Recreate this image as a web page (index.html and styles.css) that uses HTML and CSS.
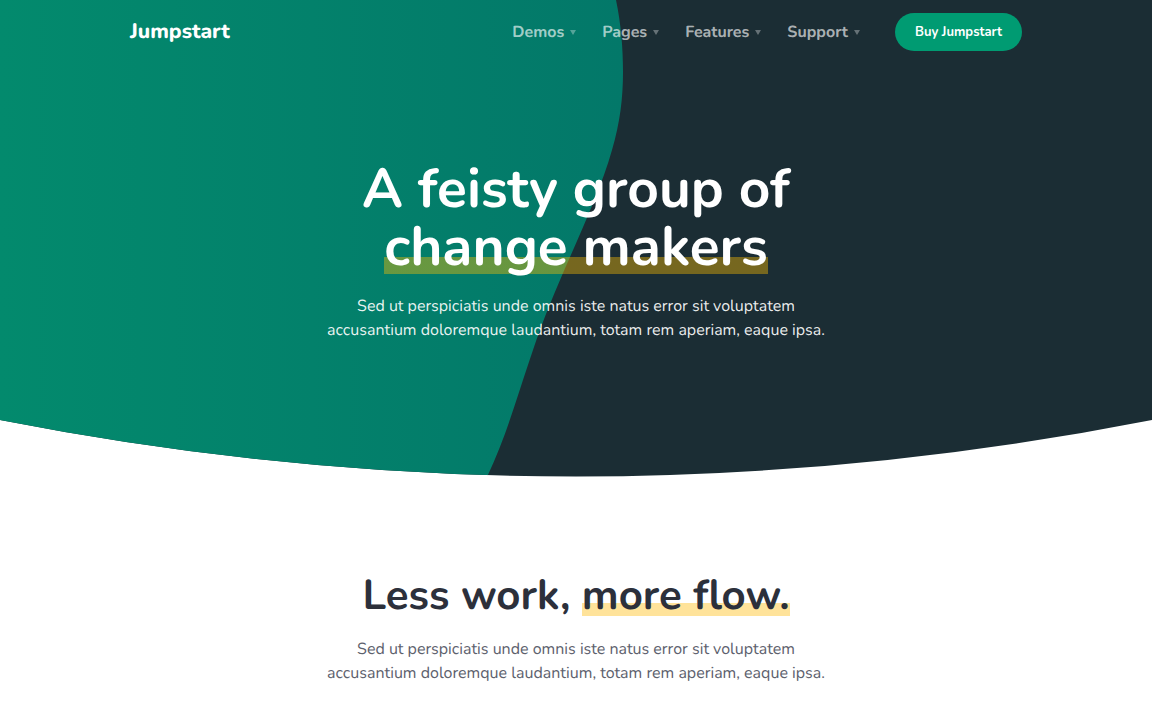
FILE: index.html
```html
<!DOCTYPE html>
<html lang="en">
<head>
<meta charset="utf-8">
<meta name="viewport" content="width=device-width, initial-scale=1">
<title>Jumpstart</title>
<link rel="stylesheet" href="styles.css">
</head>
<body>
<div class="hero">
  <svg class="hero-art" viewBox="0 0 1152 477" preserveAspectRatio="none" aria-hidden="true">
    <defs>
      <linearGradient id="green" x1="0" x2="1" y1="0" y2="0">
        <stop offset="0" stop-color="#038a6d"/>
        <stop offset="1" stop-color="#037869"/>
      </linearGradient>
      <clipPath id="bowl"><path d="M0 0H1152V420Q576 533 0 420Z"/></clipPath>
    </defs>
    <g clip-path="url(#bowl)">
      <path fill="#1b2d34" d="M0 0H1152V477H0Z"/>
      <path fill="url(#green)" d="M0 0H616C621 24 623 48 623 72C623 98 620 123 612 150C603 182 586 221 570 257C555 291 543 320 533 350C517 397 506 437 487 477H0Z"/>
    </g>
  </svg>
  <header class="container navbar">
    <a class="brand" href="#">Jumpstart</a>
    <nav class="menu" aria-label="Main">
      <a class="menu-link" href="#">Demos<svg class="caret" viewBox="0 0 6 5" aria-hidden="true"><path d="M0 0H6L3 5Z"/></svg></a>
      <a class="menu-link" href="#">Pages<svg class="caret" viewBox="0 0 6 5" aria-hidden="true"><path d="M0 0H6L3 5Z"/></svg></a>
      <a class="menu-link" href="#">Features<svg class="caret" viewBox="0 0 6 5" aria-hidden="true"><path d="M0 0H6L3 5Z"/></svg></a>
      <a class="menu-link" href="#">Support<svg class="caret" viewBox="0 0 6 5" aria-hidden="true"><path d="M0 0H6L3 5Z"/></svg></a>
    </nav>
    <button class="buy" type="button">Buy Jumpstart</button>
  </header>
  <section class="intro">
    <h1 class="title">A feisty group of<br><mark class="mark">change makers</mark></h1>
    <p class="lead">Sed ut perspiciatis unde omnis iste natus error sit voluptatem<br>accusantium doloremque laudantium, totam rem aperiam, eaque ipsa.</p>
  </section>
</div>
<main class="flow">
  <h2 class="subtitle">Less work, <mark class="mark mark-light">more flow.</mark></h2>
  <p class="lead lead-muted">Sed ut perspiciatis unde omnis iste natus error sit voluptatem<br>accusantium doloremque laudantium, totam rem aperiam, eaque ipsa.</p>
</main>
</body>
</html>
```
FILE: styles.css
```css
* { box-sizing: border-box; }

body {
  margin: 0;
  background: #fff;
  color: #2c303b;
  font-family: Nunito, Lato, sans-serif;
  font-size: 16px;
  line-height: 24px;
  text-rendering: geometricPrecision;
}

.hero {
  position: relative;
  isolation: isolate;
  padding-bottom: 135px;
  color: #fff;
}

.hero-art {
  position: absolute;
  inset: 0;
  z-index: -1;
  width: 100%;
  height: 100%;
}

.container {
  width: 100%;
  max-width: 924px;
  margin: 0 auto;
  padding: 0 16px;
}

.navbar {
  display: flex;
  align-items: center;
  height: 64px;
}

.brand {
  margin-right: auto;
  color: #fff;
  font-size: 21px;
  font-weight: 800;
  text-decoration: none;
}

.menu {
  display: flex;
  gap: 26px;
  margin-right: 35px;
}

.menu-link {
  display: flex;
  align-items: center;
  gap: 6px;
  color: rgba(255, 255, 255, 0.65);
  font-size: 16px;
  font-weight: 700;
  text-decoration: none;
}

.caret {
  width: 6px;
  height: 5px;
  fill: currentColor;
  opacity: 0.5;
}

.buy {
  height: 38px;
  padding: 0 20px;
  border: 0;
  border-radius: 19px;
  background: #009b72;
  color: #fff;
  font: inherit;
  font-size: 13px;
  font-weight: 700;
}

.intro {
  padding-top: 97px;
  text-align: center;
}

.title {
  margin: 0 0 17px;
  font-size: 55px;
  font-weight: 700;
  line-height: 58px;
}

.subtitle {
  margin: 0 0 16px;
  font-size: 42px;
  font-weight: 700;
  line-height: 50px;
}

.mark {
  background: linear-gradient(rgba(255, 190, 0, 0.4), rgba(255, 190, 0, 0.4)) 0 81% / 100% 17px no-repeat;
  color: inherit;
}

.mark-light {
  background: linear-gradient(#ffe39a, #ffe39a) 0 81% / 100% 13px no-repeat;
}

.lead {
  margin: 0;
  color: rgba(255, 255, 255, 0.92);
}

.lead-muted { color: #5d616d; }

.flow {
  padding: 94px 16px 35px;
  text-align: center;
}
```
